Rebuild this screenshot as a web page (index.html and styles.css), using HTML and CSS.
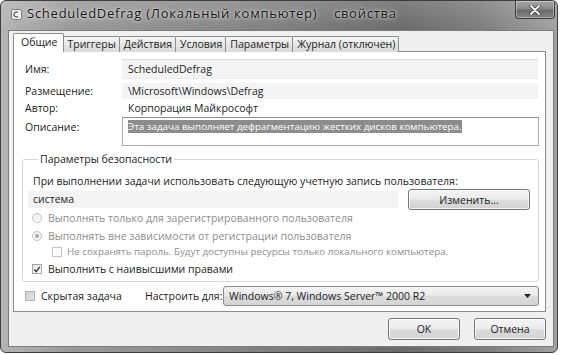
FILE: index.html
```html
<!DOCTYPE html>
<html lang="ru">
<head>
    <meta charset="UTF-8">
    <title>ScheduledDefrag - свойства</title>
    <link rel="stylesheet" href="styles.css">
</head>
<body>
    <div class="window">
        <div class="titlebar">
            <svg class="app-icon" width="11" height="11" viewBox="0 0 11 11">
                <rect x="0.5" y="0.5" width="10" height="10" rx="2" fill="#f4f4f4" stroke="#7a7a7a"/>
                <path d="M7 3.5 A2.5 2.5 0 1 0 7 7.5" fill="none" stroke="#555" stroke-width="1.2"/>
            </svg>
            <span class="title">ScheduledDefrag (Локальный компьютер)&nbsp;&nbsp;&nbsp; свойства</span>
            <div class="close">
                <svg width="12" height="10" viewBox="0 0 12 10">
                    <path d="M2 1 L10 9 M10 1 L2 9" stroke="#3a3a3a" stroke-width="3.4" stroke-linecap="round"/>
                    <path d="M2 1 L10 9 M10 1 L2 9" stroke="#ffffff" stroke-width="1.8" stroke-linecap="round"/>
                </svg>
            </div>
        </div>
        <div class="client">
            <div class="tabs">
                <div class="tab active">Общие</div>
                <div class="tab">Триггеры</div>
                <div class="tab">Действия</div>
                <div class="tab">Условия</div>
                <div class="tab">Параметры</div>
                <div class="tab">Журнал (отключен)</div>
            </div>
            <div class="panel">
                <div class="row row-name">
                    <span class="label">Имя:</span>
                    <div class="field field-box">ScheduledDefrag</div>
                </div>
                <div class="row row-place">
                    <span class="label">Размещение:</span>
                    <div class="field field-grey">\Microsoft\Windows\Defrag</div>
                </div>
                <div class="row row-author">
                    <span class="label">Автор:</span>
                    <div class="field">Корпорация Майкрософт</div>
                </div>
                <div class="row row-desc">
                    <span class="label">Описание:</span>
                    <div class="textarea"><span class="selected">Эта задача выполняет дефрагментацию жестких дисков компьютера.</span></div>
                </div>

                <fieldset class="security">
                    <legend>Параметры безопасности</legend>
                    <div class="account-hint">При выполнении задачи использовать следующую учетную запись пользователя:</div>
                    <div class="account-row">
                        <div class="account-field">система</div>
                        <button type="button" class="btn btn-change">Изменить...</button>
                    </div>
                    <div class="option disabled">
                        <span class="radio"></span>
                        Выполнять только для зарегистрированного пользователя
                    </div>
                    <div class="option disabled option-r2">
                        <span class="radio checked"></span>
                        Выполнять вне зависимости от регистрации пользователя
                    </div>
                    <div class="option disabled option-sub">
                        <span class="checkbox"></span>
                        Не сохранять пароль. Будут доступны ресурсы только локального компьютера.
                    </div>
                    <div class="option option-top">
                        <span class="checkbox checked">
                            <svg width="9" height="9" viewBox="0 0 9 9"><path d="M1.5 4.5 L3.6 7 L7.6 1.6" fill="none" stroke="#333" stroke-width="1.5"/></svg>
                        </span>
                        Выполнить с наивысшими правами
                    </div>
                </fieldset>

                <div class="bottom-row">
                    <div class="hidden-task">
                        <span class="checkbox grey"></span>
                        Скрытая задача
                    </div>
                    <span class="config-label">Настроить для:</span>
                    <div class="combo">
                        <span>Windows® 7, Windows Server™ 2000 R2</span>
                        <svg width="7" height="4" viewBox="0 0 7 4"><path d="M0 0 H7 L3.5 4 Z" fill="#222"/></svg>
                    </div>
                </div>
            </div>
            <div class="buttons">
                <button type="button" class="btn btn-dialog">OK</button>
                <button type="button" class="btn btn-dialog">Отмена</button>
            </div>
        </div>
    </div>
</body>
</html>
```

FILE: styles.css
```css
*{
    box-sizing: border-box;
}
body{
    margin: 0;
    background: #ffffff;
    font-family: "Open Sans", "Noto Sans", sans-serif;
    font-size: 10.5px;
    color: #1c1c1c;
}
.window{
    width: 558px;
    height: 353px;
    border: 1px solid #3e3e3e;
    border-radius: 6px;
    overflow: hidden;
    display: flex;
    flex-direction: column;
    background:
        linear-gradient(180deg, rgba(255,255,255,0.15) 0px, rgba(255,255,255,0) 30px),
        linear-gradient(90deg, #b4b4b4 0%, #9a9a9a 12%, #8a8a8a 35%, #7a7a7a 55%, #6a6a6a 72%, #7c7c7c 86%, #a0a0a0 100%);
}

/* title bar */
.titlebar{
    height: 29px;
    display: flex;
    align-items: flex-start;
    padding-left: 10px;
}
.app-icon{
    margin-top: 8px;
}
.title{
    margin-top: 3px;
    margin-left: 5px;
    font-size: 13px;
    letter-spacing: 0.75px;
    color: #161616;
    text-shadow: 0 0 5px rgba(255,255,255,0.8), 0 0 2px rgba(255,255,255,0.6);
    white-space: nowrap;
}
.close{
    margin-left: auto;
    margin-right: 2px;
    width: 40px;
    height: 18px;
    border: 1px solid #3c3c3c;
    border-top: none;
    border-radius: 0 0 4px 4px;
    background: linear-gradient(180deg, #a6a6a6 0%, #8a8a8a 45%, #6a6a6a 55%, #858585 100%);
    box-shadow: inset 0 0 0 1px rgba(255,255,255,0.35);
    display: flex;
    align-items: center;
    justify-content: center;
}

/* client area */
.client{
    margin: 0 3px 0 7px;
    height: 317px;
    background: #f0f0f0;
    border: 1px solid #7c7c7c;
    padding: 3px 7px 0 4px;
    display: flex;
    flex-direction: column;
}
.tabs{
    display: flex;
    align-items: flex-end;
    height: 18px;
    margin-bottom: -1px;
    padding-left: 2px;
    position: relative;
    z-index: 1;
}
.tab{
    height: 16px;
    line-height: 14px;
    padding: 0 3px 0 4px;
    border: 1px solid #8c8c8c;
    border-bottom: none;
    margin-left: -1px;
    background: linear-gradient(180deg, #f6f6f6 0%, #e6e6e6 50%, #dadada 100%);
    border-radius: 2px 2px 0 0;
    white-space: nowrap;
}
.tab.active{
    height: 19px;
    line-height: 17px;
    padding: 0 6px 0 7px;
    background: #ffffff;
    margin-left: -2px;
    margin-right: -1px;
    position: relative;
}
.panel{
    height: 261px;
    background: #ffffff;
    border: 1px solid #8c8c8c;
    padding: 7px 7px 0 8px;
    display: flex;
    flex-direction: column;
}

/* info rows */
.row{
    display: grid;
    grid-template-columns: 100px 1fr;
    align-items: center;
}
.row .label{
    padding-left: 3px;
}
.field{
    padding-left: 6px;
    height: 16px;
    line-height: 16px;
}
.row-name .field{
    height: 20px;
    line-height: 19px;
}
.field-box{
    background: #f3f3f3;
    border-top: 1px solid #dcdcdc;
    border-bottom: 1px solid #ececec;
}
.field-grey{
    background: #f4f4f4;
}
.row-place{
    margin-top: 4px;
}
.row-author{
    margin-top: 1px;
}
.row-desc{
    margin-top: 1px;
    align-items: start;
}
.row-desc .label{
    padding-top: 3px;
}
.textarea{
    height: 29px;
    margin-right: -1px;
    border: 1px solid #ababab;
    border-top-color: #8e8e8e;
    padding: 2px 5px;
    line-height: 12px;
}
.textarea .selected{
    background: #8c8c8c;
    color: #ffffff;
    font-size: 9.8px;
}

/* security group */
.security{
    margin: 6px -1px 0 0;
    padding: 8px 8px 5px 10px;
    border: 1px solid #d6d6d6;
    border-radius: 3px;
}
.security legend{
    padding: 0 2px;
    margin-left: 5px;
    line-height: 14px;
}
.account-hint{
    line-height: 14px;
}
.account-row{
    margin-top: 1px;
    display: flex;
    align-items: center;
    justify-content: space-between;
    height: 21px;
}
.account-field{
    margin-left: -5px;
    width: 370px;
    height: 17px;
    line-height: 17px;
    padding-left: 5px;
    background: #f3f3f3;
}
.btn{
    font-family: inherit;
    font-size: 10.5px;
    color: #1c1c1c;
    border: 1px solid #767676;
    border-radius: 3px;
    background: linear-gradient(180deg, #f4f4f4 0%, #ebebeb 48%, #dddddd 52%, #d1d1d1 100%);
    box-shadow: inset 0 0 0 1px rgba(255,255,255,0.7);
    padding: 0;
}
.btn-change{
    width: 122px;
    height: 21px;
}
.option{
    display: flex;
    align-items: center;
    gap: 6px;
    line-height: 14px;
    margin-top: 1px;
}
.option.disabled{
    color: #8d8d8d;
}
.option-r2{
    margin-top: 4px;
}
.option-sub{
    margin-top: 2px;
    padding-left: 19px;
    gap: 5px;
    font-size: 9.8px;
}
.option-top{
    margin-top: 3px;
}
.radio{
    margin-left: -1px;
    width: 10px;
    height: 10px;
    border-radius: 50%;
    border: 1px solid #c2c2c2;
    background: linear-gradient(180deg, #efefef, #fafafa);
    display: flex;
    align-items: center;
    justify-content: center;
}
.radio.checked::after{
    content: "";
    width: 4px;
    height: 4px;
    border-radius: 50%;
    background: #a4a4a4;
}
.checkbox{
    width: 10px;
    height: 10px;
    border: 1px solid #a6a6a6;
    background: linear-gradient(135deg, #e4e4e4, #fbfbfb);
    display: flex;
    align-items: center;
    justify-content: center;
}
.option-sub .checkbox{
    border-color: #c4c4c4;
    background: #fcfcfc;
}
.option-top .checkbox{
    margin-left: -1px;
}
.checkbox.grey{
    border-color: #b0b0b0;
    background: linear-gradient(135deg, #cfcfcf, #e6e6e6);
}

/* bottom row */
.bottom-row{
    margin-top: 4px;
    display: flex;
    align-items: center;
    height: 20px;
}
.hidden-task{
    display: flex;
    align-items: center;
    gap: 6px;
    padding-left: 3px;
    width: 123px;
}
.config-label{
    width: 78px;
}
.combo{
    flex: 1;
    margin-right: -1px;
    height: 20px;
    border: 1px solid #8a8a8a;
    border-radius: 3px;
    background: linear-gradient(180deg, #f3f3f3 0%, #e8e8e8 48%, #dcdcdc 52%, #d4d4d4 100%);
    display: flex;
    align-items: center;
    justify-content: space-between;
    padding: 0 7px 0 5px;
}

/* dialog buttons */
.buttons{
    margin-top: 6px;
    display: flex;
    justify-content: flex-end;
    gap: 14px;
}
.btn-dialog{
    width: 72px;
    height: 22px;
}
```
